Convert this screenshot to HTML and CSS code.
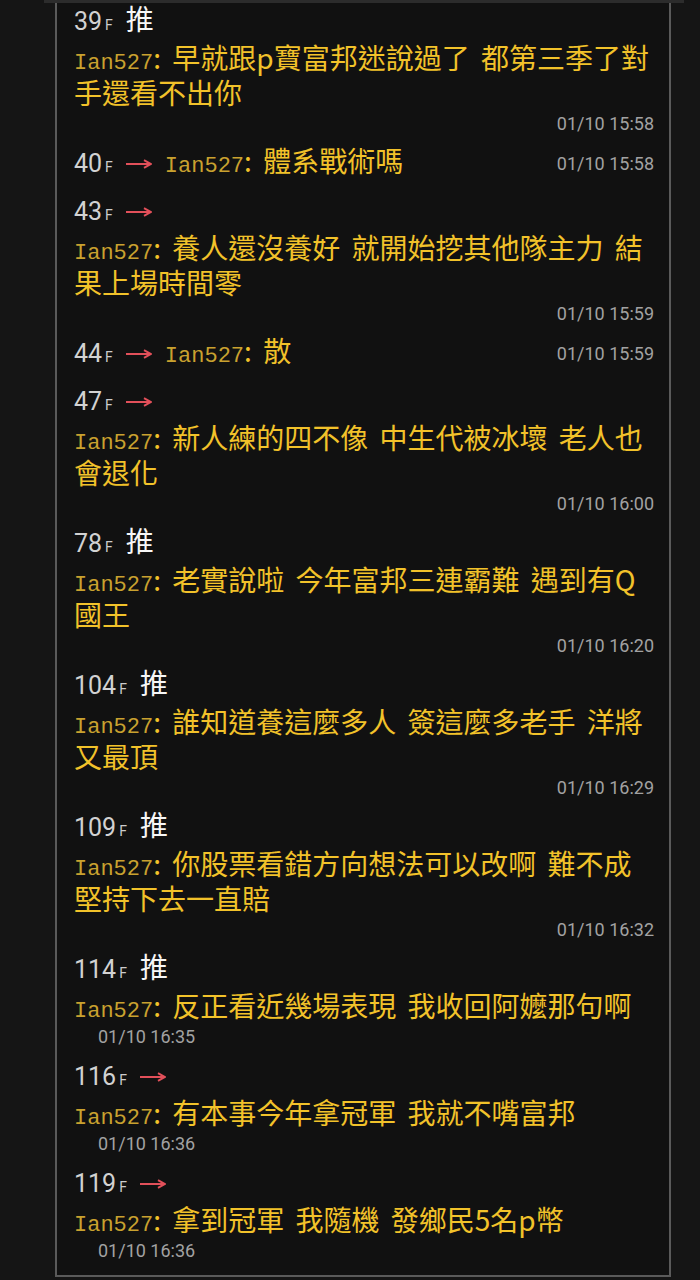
FILE: index.html
```html
<!DOCTYPE html>
<html lang="zh-Hant">
<head>
<meta charset="utf-8">
<title>推文</title>
<link rel="stylesheet" href="styles.css">
</head>
<body>
<div class="topbar"></div>
<div class="frame">

  <div class="item">
    <div class="head"><span class="floor">39<span class="f">F</span></span><span class="mark push">推</span></div>
    <div class="body"><span class="uid">Ian527</span>: 早就跟p寶富邦迷說過了 都第三季了對手還看不出你</div>
    <div class="time">01/10 15:58</div>
  </div>

  <div class="item single">
    <div class="head"><span class="floor">40<span class="f">F</span></span><span class="mark arrow"><svg viewBox="0 0 26 10" width="26" height="10"><path d="M0 5H25M18 1.2L25 5L18 8.8" fill="none" stroke="currentColor" stroke-width="2"/></svg></span><span class="inline-body"><span class="uid">Ian527</span>: 體系戰術嗎</span></div>
    <div class="time">01/10 15:58</div>
  </div>

  <div class="item">
    <div class="head"><span class="floor">43<span class="f">F</span></span><span class="mark arrow"><svg viewBox="0 0 26 10" width="26" height="10"><path d="M0 5H25M18 1.2L25 5L18 8.8" fill="none" stroke="currentColor" stroke-width="2"/></svg></span></div>
    <div class="body"><span class="uid">Ian527</span>: 養人還沒養好 就開始挖其他隊主力 結果上場時間零</div>
    <div class="time">01/10 15:59</div>
  </div>

  <div class="item single">
    <div class="head"><span class="floor">44<span class="f">F</span></span><span class="mark arrow"><svg viewBox="0 0 26 10" width="26" height="10"><path d="M0 5H25M18 1.2L25 5L18 8.8" fill="none" stroke="currentColor" stroke-width="2"/></svg></span><span class="inline-body"><span class="uid">Ian527</span>: 散</span></div>
    <div class="time">01/10 15:59</div>
  </div>

  <div class="item">
    <div class="head"><span class="floor">47<span class="f">F</span></span><span class="mark arrow"><svg viewBox="0 0 26 10" width="26" height="10"><path d="M0 5H25M18 1.2L25 5L18 8.8" fill="none" stroke="currentColor" stroke-width="2"/></svg></span></div>
    <div class="body"><span class="uid">Ian527</span>: 新人練的四不像 中生代被冰壞 老人也會退化</div>
    <div class="time">01/10 16:00</div>
  </div>

  <div class="item">
    <div class="head"><span class="floor">78<span class="f">F</span></span><span class="mark push">推</span></div>
    <div class="body"><span class="uid">Ian527</span>: 老實說啦 今年富邦三連霸難 遇到有Q國王</div>
    <div class="time">01/10 16:20</div>
  </div>

  <div class="item">
    <div class="head"><span class="floor">104<span class="f">F</span></span><span class="mark push">推</span></div>
    <div class="body"><span class="uid">Ian527</span>: 誰知道養這麼多人 簽這麼多老手 洋將又最頂</div>
    <div class="time">01/10 16:29</div>
  </div>

  <div class="item">
    <div class="head"><span class="floor">109<span class="f">F</span></span><span class="mark push">推</span></div>
    <div class="body"><span class="uid">Ian527</span>: 你股票看錯方向想法可以改啊 難不成堅持下去一直賠</div>
    <div class="time">01/10 16:32</div>
  </div>

  <div class="item">
    <div class="head"><span class="floor">114<span class="f">F</span></span><span class="mark push">推</span></div>
    <div class="body"><span class="uid">Ian527</span>: 反正看近幾場表現 我收回阿嬤那句啊</div>
    <div class="time short">01/10 16:35</div>
  </div>

  <div class="item">
    <div class="head"><span class="floor">116<span class="f">F</span></span><span class="mark arrow"><svg viewBox="0 0 26 10" width="26" height="10"><path d="M0 5H25M18 1.2L25 5L18 8.8" fill="none" stroke="currentColor" stroke-width="2"/></svg></span></div>
    <div class="body"><span class="uid">Ian527</span>: 有本事今年拿冠軍 我就不嘴富邦</div>
    <div class="time short">01/10 16:36</div>
  </div>

  <div class="item">
    <div class="head"><span class="floor">119<span class="f">F</span></span><span class="mark arrow"><svg viewBox="0 0 26 10" width="26" height="10"><path d="M0 5H25M18 1.2L25 5L18 8.8" fill="none" stroke="currentColor" stroke-width="2"/></svg></span></div>
    <div class="body"><span class="uid">Ian527</span>: 拿到冠軍 我隨機 發鄉民5名p幣</div>
    <div class="time short">01/10 16:36</div>
  </div>

</div>
</body>
</html>
```

FILE: styles.css
```css
*, *::before, *::after {
  box-sizing: border-box;
}

html, body {
  margin: 0;
  padding: 0;
  background: #151515;
}

body {
  width: 700px;
  height: 1280px;
  overflow: hidden;
  font-family: "Noto Sans CJK TC", "Noto Sans", sans-serif;
}

.topbar {
  margin-left: 44px;
  width: 640px;
  height: 3px;
  background: #2c2c2c;
}

.frame {
  margin-left: 55px;
  width: 616px;
  border: 2px solid #5a5a5a;
  border-top: none;
  background: #111111;
  padding: 0 15px 3px 17px;
}

.item {
  margin-bottom: 8px;
}

.item.single {
  display: flex;
  align-items: center;
  justify-content: space-between;
  margin-bottom: 11px;
}

.head {
  height: 37px;
  font-family: "Noto Sans CJK TC", sans-serif;
  font-size: 28px;
  line-height: 31px;
  white-space: nowrap;
}

.floor {
  font-family: Roboto, "Liberation Sans", sans-serif;
  font-size: 25px;
  line-height: 1;
  color: #d2d2d2;
}

.f {
  font-size: 14px;
  margin-left: 3px;
  color: #cccccc;
}

.mark {
  display: inline-block;
  font-size: 28px;
  line-height: 1;
  margin-left: 13px;
}

.mark.push {
  color: #f7f7f7;
}

.mark.arrow {
  color: #e2505a;
  vertical-align: middle;
}

.mark.arrow svg {
  display: block;
}

.inline-body {
  margin-left: 13px;
  font-size: 28px;
  line-height: 1;
  color: #f2c22a;
  word-spacing: 5px;
}

.body {
  font-size: 28px;
  line-height: 35px;
  color: #f2c22a;
  word-spacing: 5px;
  padding-right: 4px;
}

.uid {
  font-family: "Liberation Mono", "DejaVu Sans Mono", monospace;
  font-size: 22px;
  line-height: 1;
  color: #c9a12f;
  word-spacing: 0;
}

.time {
  font-family: Roboto, "Liberation Sans", sans-serif;
  font-size: 18px;
  line-height: 27px;
  color: #a2a2a2;
  text-align: right;
}

.time.short {
  text-align: left;
  padding-left: 24px;
}

.item.single .time {
  line-height: 37px;
}
```
